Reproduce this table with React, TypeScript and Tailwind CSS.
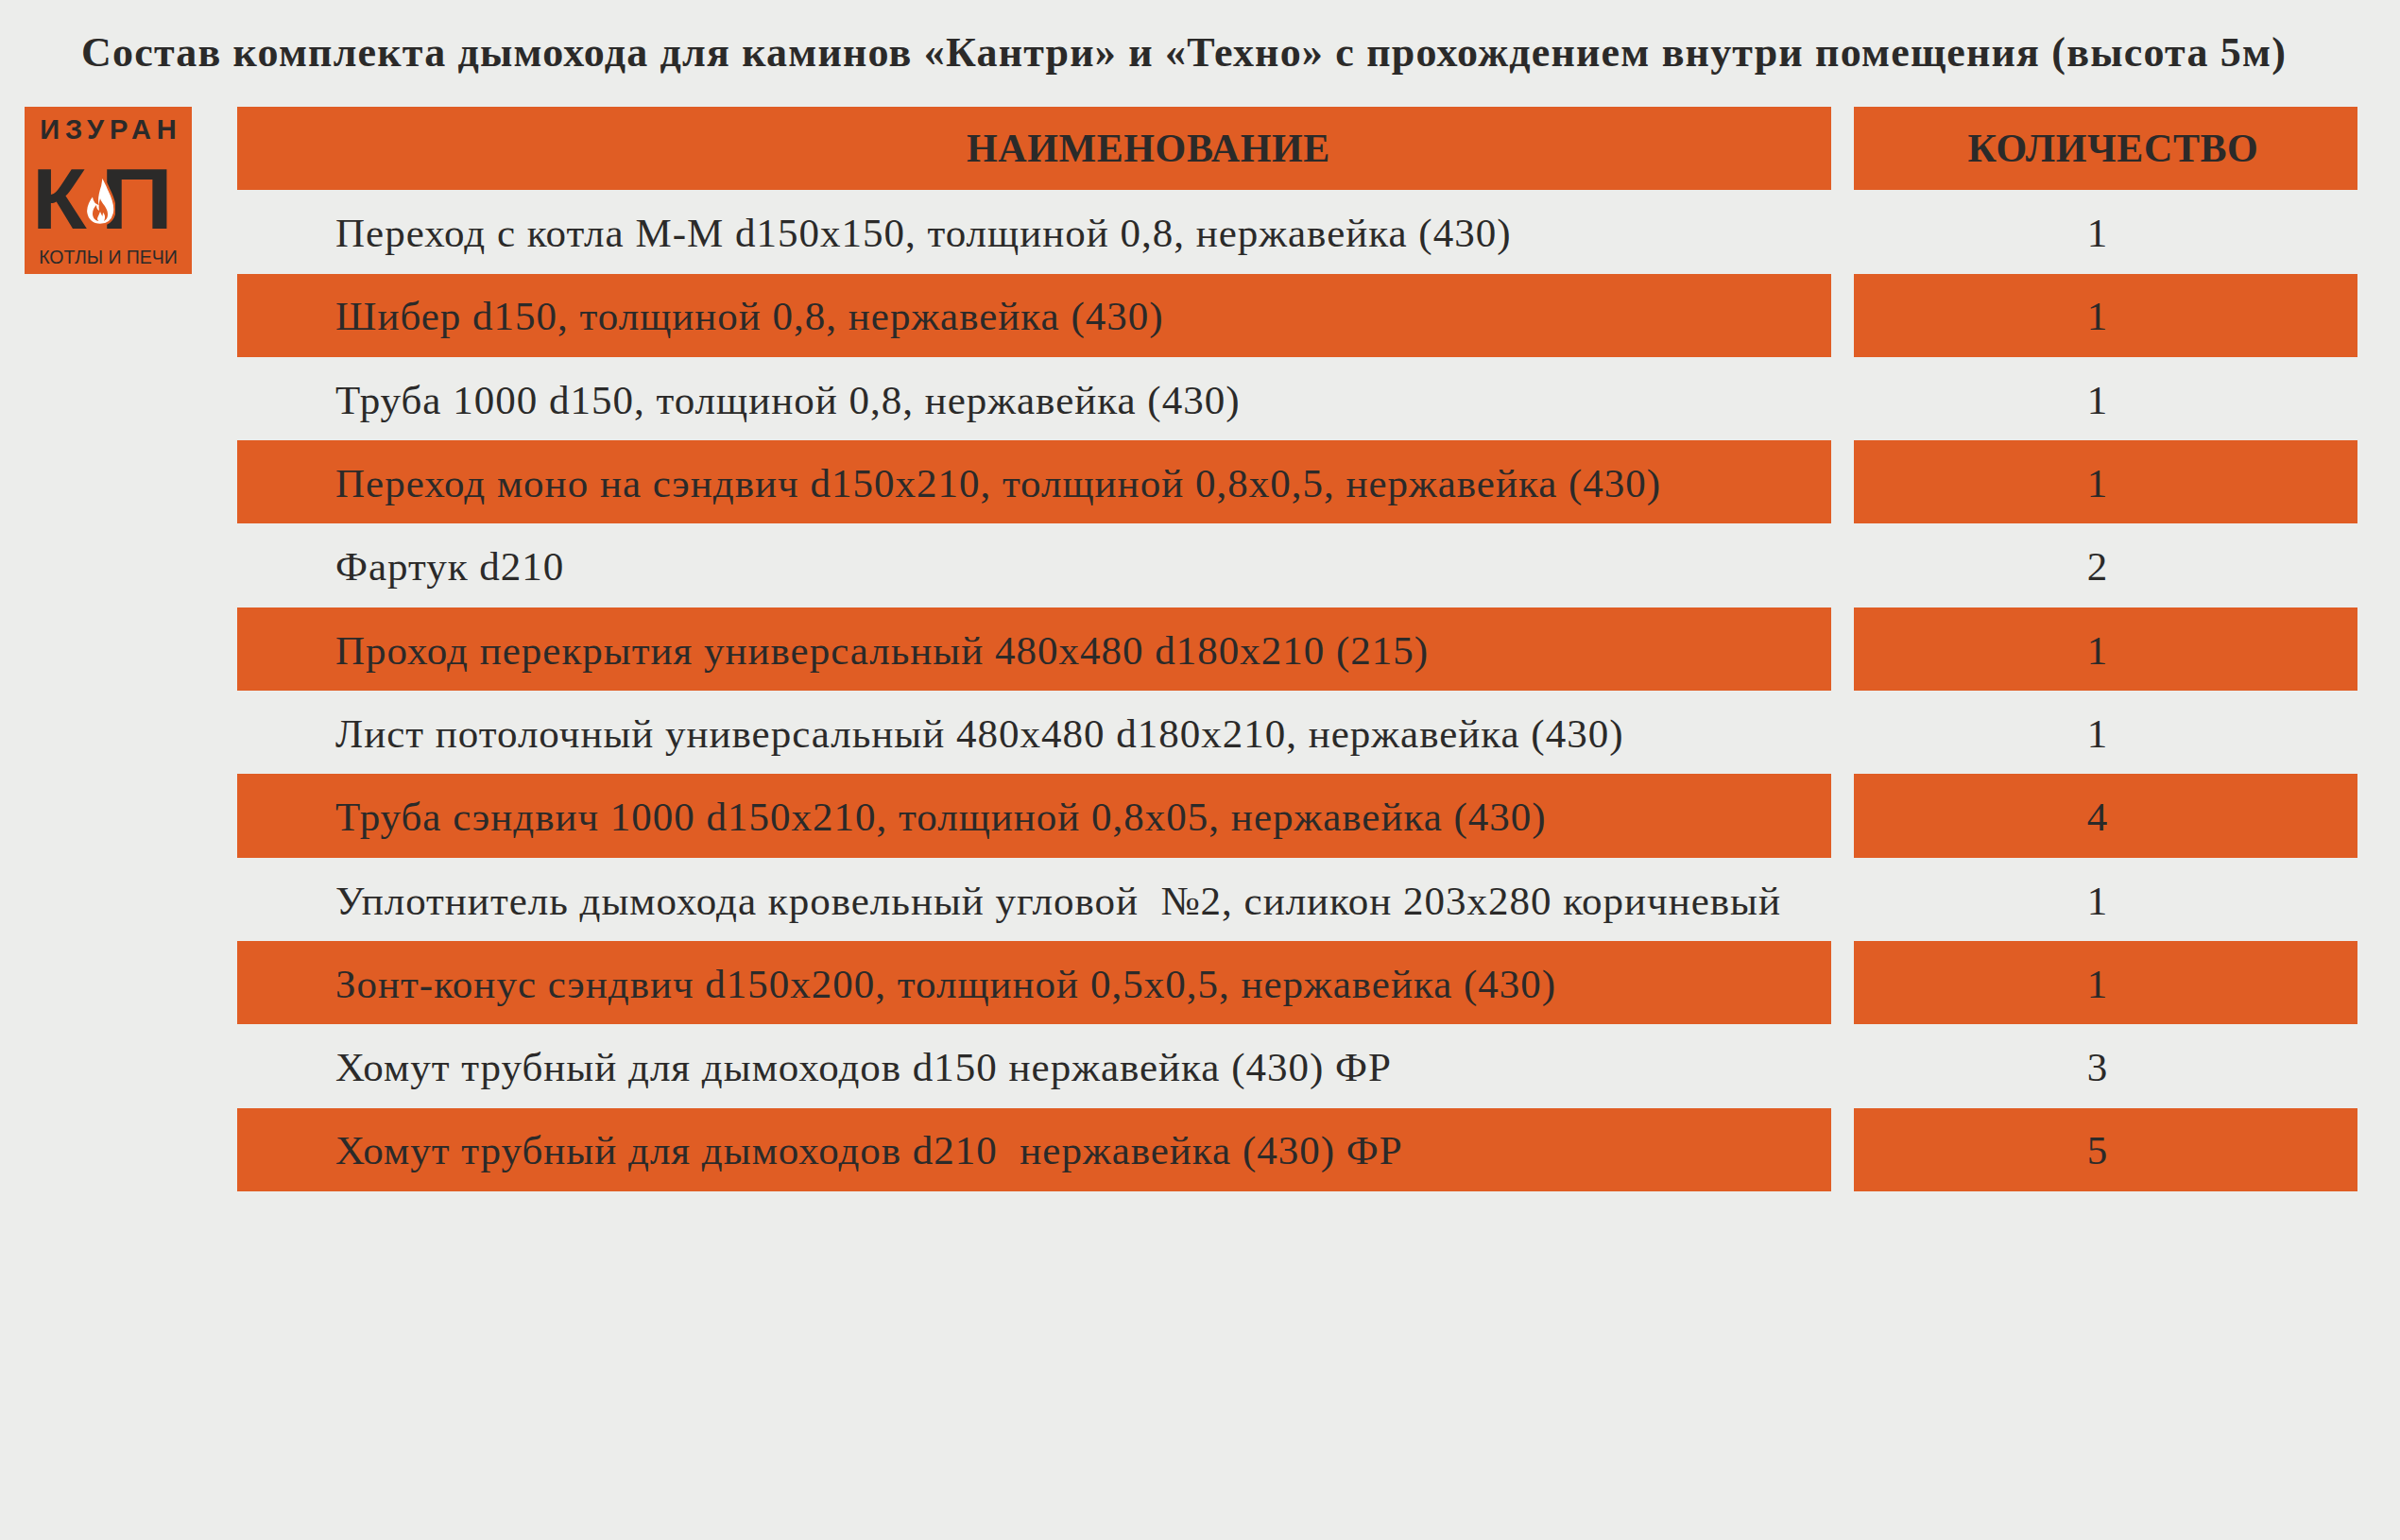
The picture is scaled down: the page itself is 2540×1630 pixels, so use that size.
const rows = [
  { name: "Переход с котла М-М d150x150, толщиной 0,8, нержавейка (430)", qty: "1" },
  { name: "Шибер d150, толщиной 0,8, нержавейка (430)", qty: "1" },
  { name: "Труба 1000 d150, толщиной 0,8, нержавейка (430)", qty: "1" },
  { name: "Переход моно на сэндвич d150x210, толщиной 0,8x0,5, нержавейка (430)", qty: "1" },
  { name: "Фартук d210", qty: "2" },
  { name: "Проход перекрытия универсальный 480x480 d180x210 (215)", qty: "1" },
  { name: "Лист потолочный универсальный 480x480 d180x210, нержавейка (430)", qty: "1" },
  { name: "Труба сэндвич 1000 d150x210, толщиной 0,8x05, нержавейка (430)", qty: "4" },
  { name: "Уплотнитель дымохода кровельный угловой  №2, силикон 203x280 коричневый", qty: "1" },
  { name: "Зонт-конус сэндвич d150x200, толщиной 0,5x0,5, нержавейка (430)", qty: "1" },
  { name: "Хомут трубный для дымоходов d150 нержавейка (430) ФР", qty: "3" },
  { name: "Хомут трубный для дымоходов d210  нержавейка (430) ФР", qty: "5" },
];

function Flame() {
  return (
    <svg viewBox="0 0 32 58" className="w-[32px] h-[58px]">
      {/* outer flame, outlined in orange so it cuts the letters */}
      <path
        d="M17 0 C18 8 22 12 25 20 C30 30 33 38 31 46 C29 54 23 58 16 58 C8 58 2 53 1 45 C0 37 5 30 9 25 C9 31 11 34 13 35 C12 28 14 22 16 16 C17 11 18 6 17 0 Z"
        fill="#ffffff"
        stroke="#e05d24"
        strokeWidth="2.5"
      />
      {/* inner cut-out */}
      <path
        d="M16 30 C17 34 21 37 23 42 C25 47 24 52 20 54 C22 50 21 47 19 45 C19 49 17 52 14 54 C10 53 8 50 8 46 C8 42 10 39 12 37 C12 40 13 42 15 43 C14 38 15 34 16 30 Z"
        fill="#e05d24"
      />
      <path
        d="M16 44 C17 47 19 49 19 52 C18 55 14 55 13 52 C13 50 15 47 16 44 Z"
        fill="#ffffff"
      />
    </svg>
  );
}

function Logo() {
  return (
    <div className="relative w-[177px] h-[177px] bg-[#e05d24] flex flex-col items-center pt-[10px] text-[#2b2a29] font-['Liberation_Sans',sans-serif]">
      <div className="text-[29px] leading-none font-bold tracking-[6px] pl-[6px] h-[28px]">ИЗУРАН</div>
      <div className="flex w-full pl-[8px] mt-[15px] h-[90px] font-bold text-[90px] leading-none">
        <span className="inline-block origin-left scale-x-[1.05]">К</span>
        <span className="inline-block origin-left scale-x-[1.2] ml-[17px]">П</span>
      </div>
      <div className="absolute left-[64px] top-[67px]">
        <Flame />
      </div>
      <div className="text-[19.5px] leading-none mt-[7px]">КОТЛЫ И ПЕЧИ</div>
    </div>
  );
}

export default function App() {
  return (
    <div className="w-[2540px] h-[1630px] bg-[#ecedeb] text-[#2b2a29] font-['Liberation_Serif',serif] overflow-hidden">
      {/* Title */}
      <h1 className="pt-[34px] pl-[86px] text-[44px] leading-none font-bold tracking-[1.2px] whitespace-nowrap">
        Состав комплекта дымохода для каминов «Кантри» и «Техно» с прохождением внутри помещения (высота 5м)
      </h1>

      <div className="flex items-start mt-[35px] pl-[26px]">
        <Logo />

        {/* Table */}
        <div className="ml-[48px] grid grid-cols-[1687px_533px] gap-x-[24px]">
          <div className="h-[88.3px] bg-[#e05d24] flex items-center justify-center pl-[242px] text-[42px] font-bold tracking-[0.6px]">
            НАИМЕНОВАНИЕ
          </div>
          <div className="h-[88.3px] bg-[#e05d24] flex items-center justify-center pl-[16px] text-[42px] font-bold tracking-[0.6px]">
            КОЛИЧЕСТВО
          </div>

          {rows.map((row, i) => {
            const orange = i % 2 === 1;
            return (
              <div key={i} className="contents">
                <div
                  className={`h-[88.3px] flex items-center pl-[104px] pt-[4px] text-[43px] tracking-[1px] whitespace-pre ${orange ? "bg-[#e05d24]" : ""}`}
                >
                  {row.name}
                </div>
                <div
                  className={`h-[88.3px] flex items-center justify-center pr-[18px] pt-[4px] text-[43px] ${orange ? "bg-[#e05d24]" : ""}`}
                >
                  {row.qty}
                </div>
              </div>
            );
          })}
        </div>
      </div>
    </div>
  );
}
